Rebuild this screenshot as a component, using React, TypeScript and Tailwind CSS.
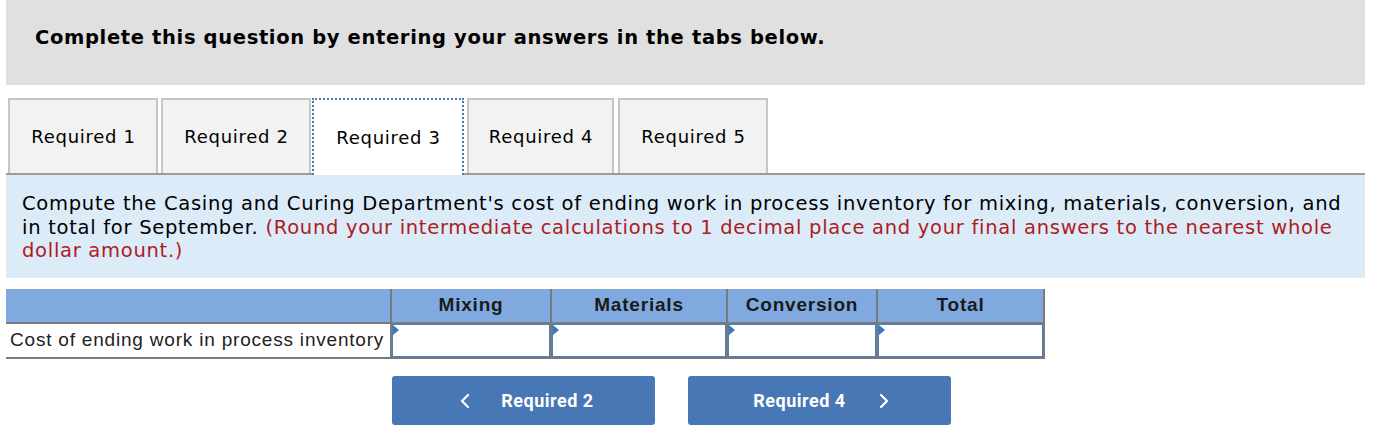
import { ChevronLeft, ChevronRight } from "lucide-react";

const tabs = [
  { label: "Required 1", width: "w-[150px]", gap: "mr-[3px]" },
  { label: "Required 2", width: "w-[150px]", gap: "mr-[1px]" },
  { label: "Required 3", width: "w-[152px]", gap: "mr-[3px]" },
  { label: "Required 4", width: "w-[147px]", gap: "mr-[4px]" },
  { label: "Required 5", width: "w-[150px]", gap: "mr-0" },
];

const columns = [
  { label: "Mixing", width: "w-[160px]" },
  { label: "Materials", width: "w-[176px]" },
  { label: "Conversion", width: "w-[150px]" },
  { label: "Total", width: "w-[167px]" },
];

function AnswerCell({ width }: { width: string }) {
  return (
    <td className={`${width} border-2 border-[#7a7a7a] p-0`}>
      <div className="relative h-[33px] border border-[#4a7fc1] bg-white">
        <span className="absolute left-0 top-0 h-0 w-0 border-y-[5px] border-l-[6px] border-y-transparent border-l-[#3d78c4]" />
      </div>
    </td>
  );
}

export default function App() {
  return (
    <div className="min-h-[428px] bg-white pl-[6px] pr-[25px] font-['DejaVu_Sans',Verdana,sans-serif] text-black">
      <div className="flex h-[85px] items-start bg-[#e0e0e0] px-[29px] pt-[23px]">
        <h2 className="text-[19.5px] font-bold tracking-[0.65px]">
          Complete this question by entering your answers in the tabs below.
        </h2>
      </div>

      <div className="mt-[13px] flex items-end border-b-2 border-[#9b9b9b] pl-[2px]">
        {tabs.map((tab) => {
          const active = tab.label === "Required 3";
          return (
            <div
              key={tab.label}
              className={`flex items-center justify-center pl-[1px] text-[18px] tracking-[0.7px] ${tab.width} ${tab.gap} ${
                active
                  ? "-mb-[2px] h-[77px] border-2 border-b-0 border-dotted border-[#4a77b4] bg-white"
                  : "h-[75px] border-2 border-b-0 border-[#c6c6c6] bg-[#f2f2f2]"
              }`}
            >
              {tab.label}
            </div>
          );
        })}
      </div>

      <div className="h-[103px] bg-[#dcebf8] px-[16px] pt-[17px] text-[19.5px] leading-[23.5px] tracking-[0.72px]">
        Compute the Casing and Curing Department's cost of ending work in process inventory for
        mixing, materials, conversion, and
        <br />
        in total for September.{" "}
        <span className="text-[#ad1c1f]">
          (Round your intermediate calculations to 1 decimal place and your final answers to the
          nearest whole
          <br />
          dollar amount.)
        </span>
      </div>

      <table className="mt-[11px] border-collapse font-['Liberation_Sans',Arial,sans-serif] text-[19px] tracking-[0.8px]">
        <thead>
          <tr className="h-[34px] bg-[#80aadf]">
            <th className="w-[385px] border-b-2 border-r-2 border-[#7a7a7a]" />
            {columns.map((col) => (
              <th
                key={col.label}
                className={`${col.width} border-2 border-t-0 border-[#7a7a7a] text-center font-bold text-[#1a1a1a]`}
              >
                {col.label}
              </th>
            ))}
          </tr>
        </thead>
        <tbody>
          <tr className="border-b-2 border-[#7a7a7a]">
            <td className="whitespace-nowrap pl-[4px] pr-[2px] text-left text-[#222]">
              Cost of ending work in process inventory
            </td>
            {columns.map((col) => (
              <AnswerCell key={col.label} width={col.width} />
            ))}
          </tr>
        </tbody>
      </table>

      <div className="mt-[17px] flex gap-[33px] pl-[386px] font-['Roboto',sans-serif]">
        <button
          type="button"
          className="flex h-[49px] w-[263px] items-center justify-center gap-[24px] rounded-[3px] bg-[#4777b4] text-[18px] font-bold tracking-[0.5px] text-white"
        >
          <ChevronLeft size={24} strokeWidth={2.25} />
          <span>Required 2</span>
        </button>
        <button
          type="button"
          className="flex h-[49px] w-[263px] items-center justify-center gap-[26px] rounded-[3px] bg-[#4777b4] pl-[10px] text-[18px] font-bold tracking-[0.5px] text-white"
        >
          <span>Required 4</span>
          <ChevronRight size={24} strokeWidth={2.25} />
        </button>
      </div>
    </div>
  );
}
